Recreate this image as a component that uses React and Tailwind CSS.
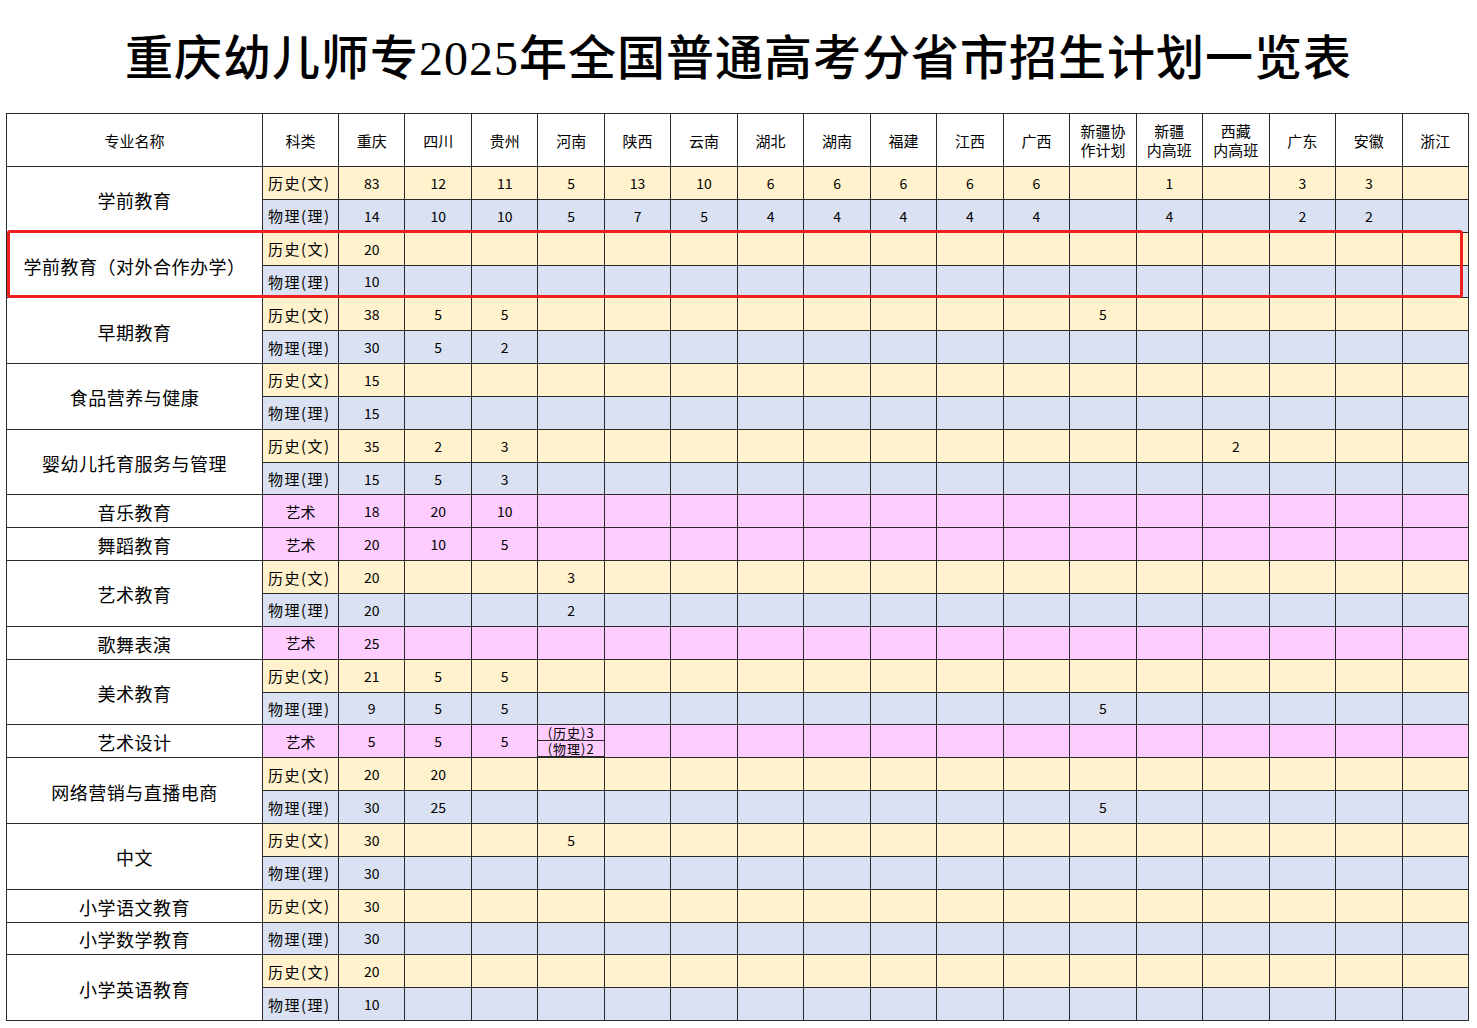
const provinces = [
  "重庆",
  "四川",
  "贵州",
  "河南",
  "陕西",
  "云南",
  "湖北",
  "湖南",
  "福建",
  "江西",
  "广西",
  ["新疆协", "作计划"],
  ["新疆", "内高班"],
  ["西藏", "内高班"],
  "广东",
  "安徽",
  "浙江",
];

const H = "历史(文)";
const P = "物理(理)";
const A = "艺术";

// each major: name + list of rows [type, values...]
const majors = [
  {
    name: "学前教育",
    rows: [
      [H, [83, 12, 11, 5, 13, 10, 6, 6, 6, 6, 6, "", 1, "", 3, 3, ""]],
      [P, [14, 10, 10, 5, 7, 5, 4, 4, 4, 4, 4, "", 4, "", 2, 2, ""]],
    ],
  },
  { name: "学前教育（对外合作办学）", rows: [[H, [20]], [P, [10]]] },
  {
    name: "早期教育",
    rows: [
      [H, [38, 5, 5, "", "", "", "", "", "", "", "", 5]],
      [P, [30, 5, 2]],
    ],
  },
  { name: "食品营养与健康", rows: [[H, [15]], [P, [15]]] },
  {
    name: "婴幼儿托育服务与管理",
    rows: [
      [H, [35, 2, 3, "", "", "", "", "", "", "", "", "", "", 2]],
      [P, [15, 5, 3]],
    ],
  },
  { name: "音乐教育", rows: [[A, [18, 20, 10]]] },
  { name: "舞蹈教育", rows: [[A, [20, 10, 5]]] },
  { name: "艺术教育", rows: [[H, [20, "", "", 3]], [P, [20, "", "", 2]]] },
  { name: "歌舞表演", rows: [[A, [25]]] },
  {
    name: "美术教育",
    rows: [
      [H, [21, 5, 5]],
      [P, [9, 5, 5, "", "", "", "", "", "", "", "", 5]],
    ],
  },
  { name: "艺术设计", rows: [[A, [5, 5, 5, "split"]]] },
  {
    name: "网络营销与直播电商",
    rows: [
      [H, [20, 20]],
      [P, [30, 25, "", "", "", "", "", "", "", "", "", 5]],
    ],
  },
  { name: "中文", rows: [[H, [30, "", "", 5]], [P, [30]]] },
  { name: "小学语文教育", rows: [[H, [30]]] },
  { name: "小学数学教育", rows: [[P, [30]]] },
  { name: "小学英语教育", rows: [[H, [20]], [P, [10]]] },
];

const bgFor = {
  [H]: "bg-[#fff2cc]",
  [P]: "bg-[#d9e1f2]",
  [A]: "bg-[#ffccff]",
};

const cellBorder = "border border-[#2a2a2a]";

export default function App() {
  return (
    <div
      className="w-[1477px] h-[1028px] bg-white text-black"
      style={{ fontFamily: '"Noto Sans CJK SC", "Noto Sans", sans-serif' }}
    >
      <div className="h-[113px] flex items-center justify-center pt-[4px]">
        <h1
          className="text-[48px] leading-none font-medium tracking-[1px]"
          style={{ fontFamily: '"Liberation Serif", "Noto Sans CJK SC", serif' }}
        >
          重庆幼儿师专2025年全国普通高考分省市招生计划一览表
        </h1>
      </div>

      <div className="relative ml-[6px] w-[1462px]">
        <table className="table-fixed border-collapse w-[1462px] text-[14px] leading-none">
          <colgroup>
            <col className="w-[256px]" />
            <col className="w-[76px]" />
            {provinces.map((_, i) => (
              <col key={i} className="w-[66.47px]" />
            ))}
          </colgroup>
          <thead>
            <tr className="h-[53px]">
              <th className={`${cellBorder} font-normal text-[15px]`}>专业名称</th>
              <th className={`${cellBorder} font-normal text-[15px]`}>科类</th>
              {provinces.map((p, i) => (
                <th key={i} className={`${cellBorder} font-normal text-[15px] leading-[19px]`}>
                  {Array.isArray(p) ? (
                    <div className="flex flex-col items-center">
                      <span>{p[0]}</span>
                      <span>{p[1]}</span>
                    </div>
                  ) : (
                    p
                  )}
                </th>
              ))}
            </tr>
          </thead>
          <tbody>
            {majors.map((m) =>
              m.rows.map(([type, vals], ri) => (
                <tr key={m.name + ri} className="h-[32.85px]">
                  {ri === 0 && (
                    <td
                      rowSpan={m.rows.length}
                      className={`${cellBorder} bg-white text-center text-[18px] tracking-[0.5px] pt-[2px]`}
                    >
                      {m.name}
                    </td>
                  )}
                  <td
                    className={`${cellBorder} ${bgFor[type]} ${
                      type === A ? "text-center" : "text-left pl-[5px] tracking-[1.5px]"
                    } text-[15px]`}
                  >
                    {type}
                  </td>
                  {provinces.map((_, ci) => {
                    const v = vals[ci];
                    if (v === "split") {
                      return (
                        <td key={ci} className={`${cellBorder} ${bgFor[type]} p-0 align-top`}>
                          <div className="flex flex-col text-[13px] tracking-[1px]">
                            <div className="h-[16px] leading-[15px] border-b border-[#2a2a2a] text-center">
                              (历史)3
                            </div>
                            <div className="h-[16px] leading-[15px] border-b border-[#2a2a2a] text-center">
                              (物理)2
                            </div>
                          </div>
                        </td>
                      );
                    }
                    return (
                      <td
                        key={ci}
                        className={`${cellBorder} ${bgFor[type]} text-center text-[14px]`}
                      >
                        {v === undefined ? "" : v}
                      </td>
                    );
                  })}
                </tr>
              ))
            )}
          </tbody>
        </table>

        {/* red highlight box over the 对外合作办学 rows */}
        <div className="absolute left-[1px] top-[117px] w-[1456px] h-[68px] border-[3px] border-[#f02020] rounded-[3px] pointer-events-none" />
      </div>
    </div>
  );
}
